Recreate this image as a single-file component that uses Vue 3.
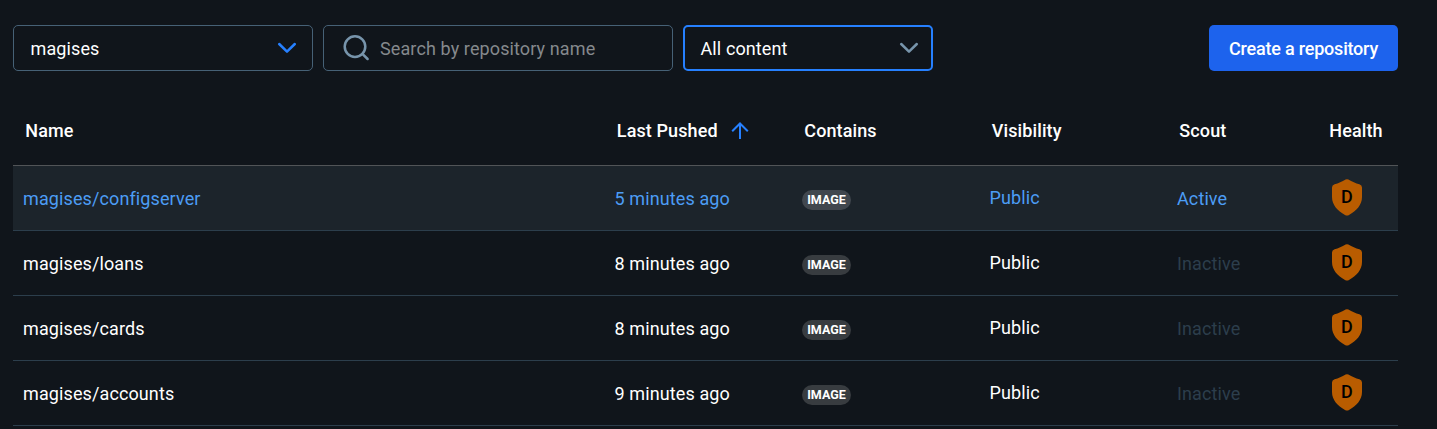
<script setup>
const columns = ['Name', 'Last Pushed', 'Contains', 'Visibility', 'Scout', 'Health']
const repositories = [
  { name: 'magises/configserver', pushed: '5 minutes ago', scout: 'Active', highlighted: true },
  { name: 'magises/loans', pushed: '8 minutes ago', scout: 'Inactive' },
  { name: 'magises/cards', pushed: '8 minutes ago', scout: 'Inactive' },
  { name: 'magises/accounts', pushed: '9 minutes ago', scout: 'Inactive' },
]
</script>

<template>
  <main class="page">
    <div class="toolbar">
      <div class="field namespace">
        <span>magises</span>
        <svg class="chevron blue" width="20" height="14" viewBox="0 0 20 14"><path d="M2.2 3 L10 10.6 L17.8 3" /></svg>
      </div>
      <div class="field search">
        <svg class="lens" width="28" height="28" viewBox="0 0 28 28"><circle cx="12" cy="12.6" r="10.3" /><path d="M19.4 19.9 L24.6 25" /></svg>
        <span>Search by repository name</span>
      </div>
      <div class="field content">
        <span>All content</span>
        <svg class="chevron" width="20" height="14" viewBox="0 0 20 14"><path d="M2.2 3 L10 10.6 L17.8 3" /></svg>
      </div>
      <button class="create">Create a repository</button>
    </div>

    <section class="table">
      <div class="row head">
        <div v-for="col in columns" :key="col" class="cell">
          <span>{{ col }}</span>
          <svg v-if="col === 'Last Pushed'" class="sort" width="18" height="18" viewBox="0 0 18 18"><path d="M9 17 V2 M1.2 9.2 L9 1.5 L16.8 9.2" /></svg>
        </div>
      </div>
      <div v-for="repo in repositories" :key="repo.name" class="row body" :class="{ highlighted: repo.highlighted }">
        <div class="cell">{{ repo.name }}</div>
        <div class="cell">{{ repo.pushed }}</div>
        <div class="cell"><span class="chip">IMAGE</span></div>
        <div class="cell visibility">Public</div>
        <div class="cell" :class="{ inactive: repo.scout === 'Inactive' }">{{ repo.scout }}</div>
        <div class="cell health">
          <svg width="30" height="37" viewBox="0 0 30 37">
            <path fill="#b95c00" d="M13.6 .5 Q15 -.2 16.4 .5 C20 2.7 23.6 4.2 27.4 5.3 Q30 6 30 8.6 V18 C30 26 24.5 31.7 17 36 Q15 37.2 13 36 C5.5 31.7 0 26 0 18 V8.6 Q0 6 2.6 5.3 C6.4 4.2 10 2.7 13.6 .5Z" />
            <text x="15" y="24" text-anchor="middle">D</text>
          </svg>
        </div>
      </div>
    </section>
  </main>
</template>

<style>
body { background: #10151b; }
</style>

<style scoped>
.page {
  box-sizing: border-box;
  height: 429px;
  padding: 25px 39px 0 13px;
  overflow: hidden;
  background: #10151b;
  color: #fff;
  font-family: Roboto, "Liberation Sans", sans-serif;
  font-size: 18px;
  line-height: 24px;
  letter-spacing: 0.11px;
}
.toolbar { display: flex; gap: 10px; height: 46px; }
.field {
  box-sizing: border-box;
  display: flex;
  align-items: center;
  height: 46px;
  border: 1px solid #466176;
  border-radius: 5px;
  padding: 0 15px 0 16.5px;
}
.field span { padding-top: 2px; }
.namespace { width: 300px; justify-content: space-between; }
.search { width: 350px; padding-left: 19px; color: #85898d; }
.content { width: 250px; justify-content: space-between; border: 2px solid #2680ff; padding: 0 12px 0 15.5px; }
.chevron { fill: none; stroke: #7794ab; stroke-width: 2.5; stroke-linecap: round; stroke-linejoin: round; }
.chevron.blue { stroke: #2680ff; }
.lens { fill: none; stroke: #7794ab; stroke-width: 2.5; stroke-linecap: round; margin-right: 9px; }
.create {
  width: 189px;
  height: 46px;
  margin-left: auto;
  padding: 2px 0 0;
  border: 0;
  border-radius: 5px;
  background: #1d63ed;
  color: #fff;
  font: 500 18px/24px Roboto, sans-serif;
  letter-spacing: -0.2px;
}
.table { margin-top: 25px; }
.row {
  box-sizing: border-box;
  display: grid;
  grid-template-columns: 591.5px 187.5px 187.5px 187.5px 150px 1fr;
  align-items: center;
}
.head { height: 70px; border-bottom: 1px solid #515457; font-weight: 500; }
.head .cell { display: flex; align-items: center; padding-left: 12.3px; white-space: nowrap; }
.sort { margin-left: 13px; fill: none; stroke: #2680ff; stroke-width: 2; }
.body { height: 65px; border-bottom: 1px solid #2c3e4c; }
.body .cell { padding: 2px 0 0 10px; white-space: nowrap; }
.highlighted { background: #1c242b; color: #4c9df5; }
.chip {
  display: block;
  width: 49px;
  height: 20px;
  margin-top: 2px;
  border-radius: 10px;
  background: #383c40;
  color: #fff;
  font-size: 12.5px;
  font-weight: 700;
  line-height: 20px;
  letter-spacing: 0;
  text-align: center;
}
.highlighted .chip { background: #41474e; }
.body .visibility { padding-top: 0; }
.body .inactive { color: #2c3e4c; }
.body .health { padding: 0 0 1px 15px; }
.health svg { display: block; }
.health text { fill: #000; font: 500 18px Roboto, sans-serif; }
</style>
